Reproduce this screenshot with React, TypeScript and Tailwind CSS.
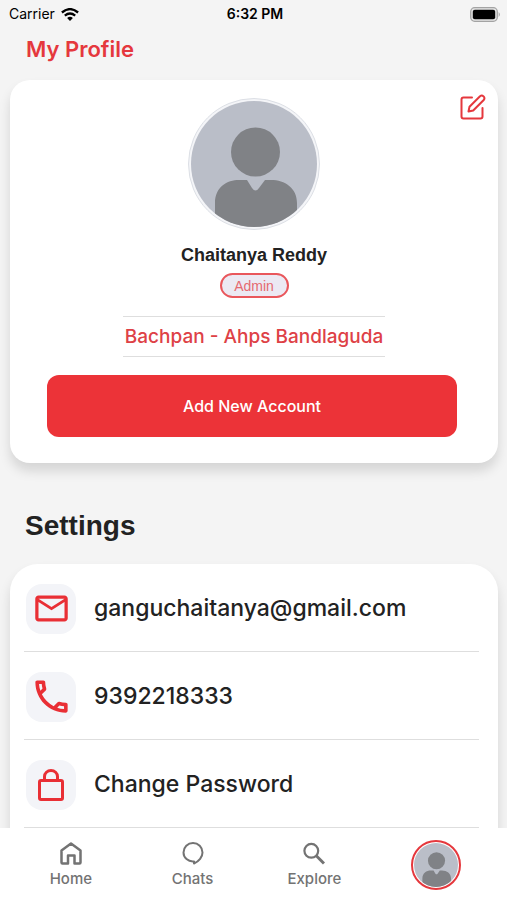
import type { ReactNode } from "react";
import { MdMailOutline, MdOutlineCall } from "react-icons/md";

function Avatar({ className }: { className?: string }) {
  return (
    <svg viewBox="0 0 126 126" className={className} aria-hidden="true">
      <defs>
        <clipPath id="avatar-clip">
          <circle cx="63" cy="63" r="63" />
        </clipPath>
      </defs>
      <g clipPath="url(#avatar-clip)">
        <rect width="126" height="126" fill="#babec8" />
        <circle cx="64.500" cy="51" r="24.5" fill="#808286" />
        <path
          d="M24 130V102C24 86 36 79 48 79H56L61 87Q64.500 92 68 87L74 79H80C94 79 106 87 106 102V130Z"
          fill="#808286"
        />
      </g>
    </svg>
  );
}

function EditIcon() {
  return (
    <svg
      viewBox="0 0 26 26"
      className="size-[26px]"
      fill="none"
      stroke="currentColor"
      strokeWidth="2"
      strokeLinecap="round"
      strokeLinejoin="round"
      aria-hidden="true"
    >
      <path d="M12 3.500H3.500Q1.500 3.500 1.500 5.500V22.500Q1.500 24.500 3.500 24.500H20.500Q22.500 24.500 22.500 22.500V14" />
      <path d="M8.500 17.500 9.500 12.800 20 2.200Q21.800 .9 23.600 2.400 25.200 4.200 23.700 6L13.200 16.500Z" />
    </svg>
  );
}

function LockIcon() {
  return (
    <svg
      viewBox="0 0 26 32"
      className="h-8 w-[26px]"
      fill="none"
      stroke="currentColor"
      strokeWidth="3"
      aria-hidden="true"
    >
      <rect x="1.500" y="11.500" width="23" height="19" rx="1.500" />
      <path d="M6.500 11V7.500a6.500 6 0 0 1 13 0V11" />
    </svg>
  );
}

function HomeIcon() {
  return (
    <svg
      viewBox="0 0 22 23"
      className="h-[23px] w-[22px]"
      fill="none"
      stroke="currentColor"
      strokeWidth="2.500"
      strokeLinejoin="round"
      aria-hidden="true"
    >
      <path d="M1.500 8.500 11 1.500 20.500 8.500V20.500Q20.500 21.500 19.500 21.500H14.500V13.500H8V21.500H2.500Q1.500 21.500 1.500 20.500Z" />
    </svg>
  );
}

function ChatIcon() {
  return (
    <svg
      viewBox="0 0 22 23"
      className="h-[23px] w-[22px]"
      fill="none"
      stroke="currentColor"
      strokeWidth="2"
      strokeLinejoin="round"
      aria-hidden="true"
    >
      <path d="M12 21.500V19.400C6 20 1.500 15.500 1.500 10.500A9.500 9.500 0 0 1 20.500 10.500C20.500 15 17 19.500 12 21.500Z" />
    </svg>
  );
}

function SearchIcon() {
  return (
    <svg
      viewBox="0 0 22 23"
      className="h-[23px] w-[22px]"
      fill="none"
      stroke="currentColor"
      aria-hidden="true"
    >
      <circle cx="8.300" cy="8.800" r="6.900" strokeWidth="2.200" />
      <path d="M13.300 13.800 21 21.500" strokeWidth="3" />
    </svg>
  );
}

function StatusBar() {
  return (
    <header className="grid h-7 shrink-0 grid-cols-3 items-center pl-[9px] pr-1.5 text-sm text-black">
      <div className="flex items-center gap-1.5">
        <span className="font-['Inter',sans-serif]">Carrier</span>
        <svg viewBox="0 0 18 13" className="h-[13px] w-[18px]" aria-hidden="true">
          <g fill="none" stroke="currentColor" strokeWidth="2.300">
            <path d="M.9 4.500Q9-2.300 17.100 4.500" />
            <path d="M3.800 7.600Q9 3.400 14.200 7.600" />
          </g>
          <path d="M6.100 9.900Q9 7.600 11.900 9.900L9 13Z" fill="currentColor" />
        </svg>
      </div>
      <span className="text-center font-['Inter',sans-serif] font-semibold">6:32 PM</span>
      <svg viewBox="0 0 31 15" className="h-[15px] w-[31px] justify-self-end" aria-hidden="true">
        <rect x=".7" y=".7" width="26.600" height="13.600" rx="4" fill="#e4e4e4" stroke="#a3a3a3" strokeWidth="1.300" />
        <rect x="2.800" y="2.800" width="22.400" height="9.400" rx="2" fill="#000" />
        <path d="M28.700 5Q31 7.500 28.700 10Z" fill="#a3a3a3" />
      </svg>
    </header>
  );
}

function SettingRow({ icon, children }: { icon: ReactNode; children: ReactNode }) {
  return (
    <li className="h-[88px] border-b border-[#dedede]">
      <button className="flex h-full w-full items-center gap-[18px] pl-0.5 pt-0.5 text-left">
        <span className="flex size-[50px] shrink-0 items-center justify-center rounded-2xl bg-[#f3f4f8] text-[#e92f35]">
          {icon}
        </span>
        <span className="font-['Inter',sans-serif] text-[23px] font-medium text-[#222]">{children}</span>
      </button>
    </li>
  );
}

function NavItem({ icon, label }: { icon: ReactNode; label: string }) {
  return (
    <a href="#" className="flex flex-col items-center gap-1">
      <span className="flex h-6 items-center">{icon}</span>
      <span className="font-['Inter',sans-serif] text-[15px] font-medium leading-5">{label}</span>
    </a>
  );
}

export default function App() {
  return (
    <div className="flex h-screen flex-col overflow-hidden bg-[#f4f4f4] font-['Liberation_Sans',sans-serif]">
      <StatusBar />

      <main className="min-h-0 flex-1 overflow-hidden pl-2.5 pr-[9px]">
        <h1 className="pl-4 pt-[5px] font-['Inter',sans-serif] text-[22px] font-semibold leading-8 text-[#e5383d]">
          My Profile
        </h1>

        <section className="relative mt-[15px] flex flex-col items-center rounded-[20px] bg-white px-[37px] pb-[26px] pt-[18px] shadow-[0_8px_12px_rgba(0,0,0,0.13)]">
          <button className="absolute right-3 top-3.5 text-[#e5383d]" aria-label="Edit profile">
            <EditIcon />
          </button>

          <div className="size-[132px] rounded-full border border-[#dcdfe5] bg-[#f4f5f8] p-0.5">
            <Avatar className="size-full" />
          </div>

          <h2 className="mt-[13px] text-lg font-bold leading-6 text-[#222]">Chaitanya Reddy</h2>
          <span className="mt-1.5 flex h-[25px] w-[69px] items-center justify-center rounded-full border-2 border-[#e9575c] bg-[#ece9f3] text-sm text-[#e56a70]">
            Admin
          </span>

          <p className="mt-[18px] border-y border-[#dedede] px-0.5 font-['Inter',sans-serif] text-[19px] font-medium leading-[39px] text-[#de4146]">
            Bachpan - Ahps Bandlaguda
          </p>

          <button className="mr-1 mt-[18px] h-[62px] self-stretch rounded-xl bg-[#ec3338] font-['Inter',sans-serif] text-base font-medium text-white">
            Add New Account
          </button>
        </section>

        <h2 className="mt-[45px] pl-[15px] text-[28px] font-bold leading-9 text-[#222]">Settings</h2>

        <ul className="mt-5 rounded-t-[28px] bg-white pb-6 pl-3.5 pr-[19px] shadow-[0_8px_12px_rgba(0,0,0,0.13)]">
          <SettingRow icon={<MdMailOutline className="size-[39px]" />}>ganguchaitanya@gmail.com</SettingRow>
          <SettingRow icon={<MdOutlineCall className="size-[43px]" />}>9392218333</SettingRow>
          <SettingRow icon={<LockIcon />}>Change Password</SettingRow>
        </ul>
      </main>

      <nav className="grid h-[72px] shrink-0 grid-cols-4 items-center bg-white px-2.5 pt-0.5 text-[#737373]">
        <NavItem icon={<HomeIcon />} label="Home" />
        <NavItem icon={<ChatIcon />} label="Chats" />
        <NavItem icon={<SearchIcon />} label="Explore" />
        <a
          href="#"
          aria-label="Profile"
          className="size-[50px] justify-self-center rounded-full border-2 border-[#e5383d] bg-white p-px"
        >
          <Avatar className="size-full" />
        </a>
      </nav>
    </div>
  );
}
